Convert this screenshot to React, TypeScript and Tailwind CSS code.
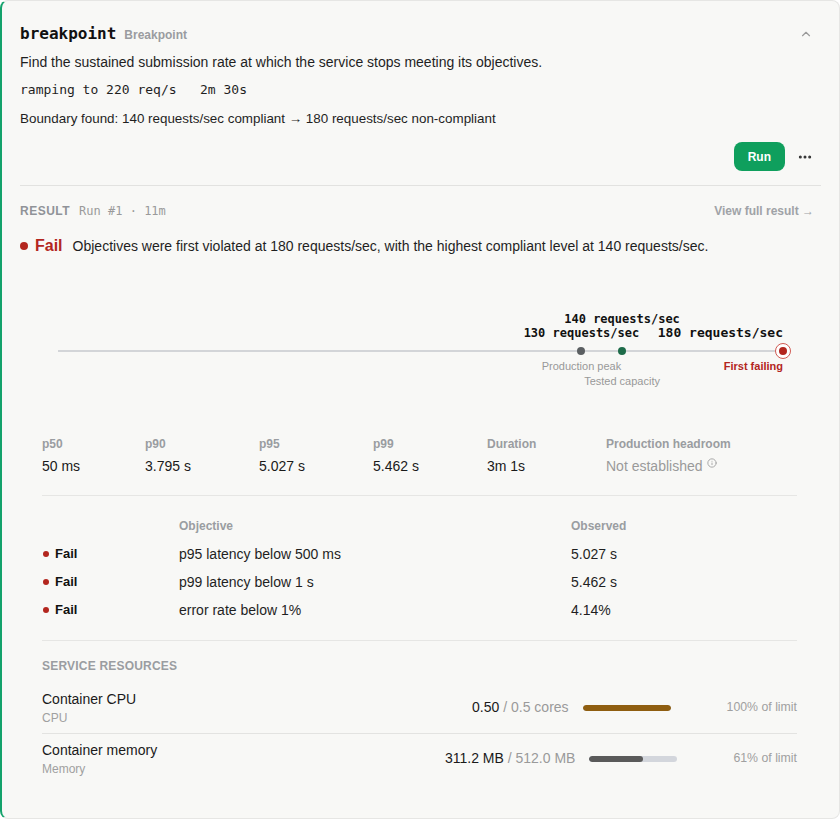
import React from 'react';
import { ChevronUp, MoreHorizontal, Info } from 'lucide-react';

const sans = "font-['Liberation_Sans',Arial,sans-serif]";
const mono = "font-['DejaVu_Sans_Mono',monospace]";

const stats = [
  { label: 'p50', value: '50 ms', w: 'w-[103px]' },
  { label: 'p90', value: '3.795 s', w: 'w-[114px]' },
  { label: 'p95', value: '5.027 s', w: 'w-[114px]' },
  { label: 'p99', value: '5.462 s', w: 'w-[114px]' },
  { label: 'Duration', value: '3m 1s', w: 'w-[119px]' },
];

const objectives = [
  { objective: 'p95 latency below 500 ms', observed: '5.027 s' },
  { objective: 'p99 latency below 1 s', observed: '5.462 s' },
  { objective: 'error rate below 1%', observed: '4.14%' },
];

const resources = [
  { name: 'Container CPU', kind: 'CPU', used: '0.50', limit: '/ 0.5 cores', pct: 100, bar: 'bg-[#8f5e10]', note: '100% of limit', pad: 'pt-[15px] pb-[7px]' },
  { name: 'Container memory', kind: 'Memory', used: '311.2 MB', limit: '/ 512.0 MB', pct: 61, bar: 'bg-[#5a5a5a]', note: '61% of limit', pad: 'pt-[6px]' },
];

function Timeline() {
  return (
    <div className="relative mx-[38px] mt-[53px] h-[78px]">
      {/* labels above */}
      <div className={`${mono} absolute top-0 left-[77.8%] -translate-x-1/2 whitespace-nowrap text-[12px] font-bold leading-4 text-[#111]`}>
        140 requests/sec
      </div>
      <div className={`${mono} absolute top-[14px] left-[72.2%] -translate-x-1/2 whitespace-nowrap text-[12px] font-bold leading-4 text-[#111]`}>
        130 requests/sec
      </div>
      <div className={`${mono} absolute top-[14px] right-0 whitespace-nowrap text-[13px] font-bold leading-4 text-[#111]`}>
        180 requests/sec
      </div>

      {/* axis */}
      <div className="absolute top-[39px] left-0 right-0 h-[2px] bg-[#d3d5d8]" />

      {/* markers */}
      <div className="absolute top-[36px] left-[72.2%] -translate-x-1/2 h-2 w-2 rounded-full bg-[#5b5f62]" />
      <div className="absolute top-[36px] left-[77.8%] -translate-x-1/2 h-2 w-2 rounded-full bg-[#1d6b49]" />
      <div className="absolute top-[32px] left-full -translate-x-1/2 flex h-4 w-4 items-center justify-center rounded-full border-[1.5px] border-[#d05a52] bg-white">
        <div className="h-2 w-2 rounded-full bg-[#b3261e]" />
      </div>

      {/* labels below */}
      <div className={`${sans} absolute top-[47px] left-[72.2%] -translate-x-1/2 whitespace-nowrap text-[11px] leading-4 text-[#999]`}>
        Production peak
      </div>
      <div className={`${sans} absolute top-[62px] left-[77.8%] -translate-x-1/2 whitespace-nowrap text-[11px] leading-4 text-[#999]`}>
        Tested capacity
      </div>
      <div className={`${sans} absolute top-[47px] right-0 whitespace-nowrap text-[11px] font-bold leading-4 text-[#b3261e]`}>
        First failing
      </div>
    </div>
  );
}

export default function App() {
  return (
    <div className={`${sans} bg-white text-[#1a1a1a]`}>
      <div className="w-full rounded-lg border border-[#e6e6e4] border-l-2 border-l-[#13a26b] bg-[#f8f8f6] pl-[18px] pr-[18px] pt-[21px] pb-[41px]">
        {/* header */}
        <div className="flex h-6 items-center justify-between">
          <div className="flex items-baseline gap-2">
            <span className={`${mono} text-[16px] font-bold text-[#111]`}>breakpoint</span>
            <span className="text-[12px] font-bold text-[#9a9ca0]">Breakpoint</span>
          </div>
          <ChevronUp size={14} className="mr-[8px] text-[#9a9a9a]" />
        </div>

        <p className="mt-[6px] text-[14px] leading-5 text-[#1f1f1f]">
          Find the sustained submission rate at which the service stops meeting its objectives.
        </p>
        <p className={`${mono} mt-2 whitespace-pre text-[13px] leading-5 text-[#1f1f1f]`}>
          {'ramping to 220 req/s   2m 30s'}
        </p>
        <p className="mt-[9px] text-[13.4px] leading-5 text-[#1f1f1f]">
          Boundary found: 140 requests/sec compliant → 180 requests/sec non-compliant
        </p>

        <div className="mt-[13px] flex items-center justify-end gap-3">
          <button className="h-[29px] rounded-lg bg-[#0f9f5d] px-[14px] text-[12px] font-bold text-white">
            Run
          </button>
          <MoreHorizontal size={16} className="mr-[8px] text-[#333]" strokeWidth={2.5} />
        </div>

        <div className="mt-[14px] h-px bg-[#e2e2e0]" />

        {/* result */}
        <div className="mt-[17px] flex items-center justify-between leading-4">
          <div className="flex items-baseline gap-[9px]">
            <span className="text-[12px] font-bold uppercase tracking-[0.5px] text-[#909398]">Result</span>
            <span className={`${mono} text-[12px] text-[#9a9a9a]`}>Run #1 · 11m</span>
          </div>
          <span className="mr-[7px] text-[12px] font-bold text-[#a0a3a7]">View full result →</span>
        </div>

        <div className="mt-[15px] flex h-6 items-center">
          <span className="h-2 w-2 rounded-full bg-[#b3261e]" />
          <span className="ml-[7px] text-[16px] font-bold text-[#b3261e]">Fail</span>
          <span className="ml-[10px] text-[14px] text-[#1f1f1f]">
            Objectives were first violated at 180 requests/sec, with the highest compliant level at 140 requests/sec.
          </span>
        </div>

        <Timeline />

        {/* stats + tables */}
        <div className="ml-[22px] mr-[24px]">
          <div className="mt-[47px] flex">
            {stats.map((s) => (
              <div key={s.label} className={s.w}>
                <div className="text-[12px] font-bold leading-4 text-[#9a9da1]">{s.label}</div>
                <div className="mt-[4px] text-[14px] leading-5 text-[#1a1a1a]">{s.value}</div>
              </div>
            ))}
            <div>
              <div className="text-[12px] font-bold leading-4 text-[#9a9da1]">Production headroom</div>
              <div className="mt-[4px] flex items-start text-[14px] leading-5 text-[#9a9a9a]">
                Not established
                <Info size={10} className="ml-[4px] mt-[2px] text-[#9a9a9a]" />
              </div>
            </div>
          </div>

          <div className="mt-[19px] h-px bg-[#e6e6e4]" />

          <div className="mt-[22px] flex text-[12px] font-bold leading-4 text-[#9a9da1]">
            <div className="w-[137px]" />
            <div className="w-[392px]">Objective</div>
            <div>Observed</div>
          </div>
          <div className="mt-[6px]">
            {objectives.map((o) => (
              <div key={o.objective} className="flex h-7 items-center text-[14px]">
                <div className="flex w-[137px] items-center">
                  <span className="ml-px h-[6px] w-[6px] rounded-full bg-[#b3261e]" />
                  <span className="ml-[6px] text-[13px] font-bold text-[#111]">Fail</span>
                </div>
                <div className="w-[392px] text-[#1f1f1f]">{o.objective}</div>
                <div className="text-[#1f1f1f]">{o.observed}</div>
              </div>
            ))}
          </div>

          <div className="mt-[16px] h-px bg-[#e6e6e4]" />

          <div className="mt-[17px] text-[12px] font-bold uppercase leading-4 tracking-[0.2px] text-[#9a9da1]">
            Service resources
          </div>

          {resources.map((r, i) => (
            <div
              key={r.name}
              className={`flex items-center justify-between ${r.pad} ${i === 0 ? 'border-b border-[#e3e3e1]' : ''}`}
            >
              <div>
                <div className="text-[14px] leading-5 text-[#1a1a1a]">{r.name}</div>
                <div className="mt-px text-[12px] leading-4 text-[#a0a0a0]">{r.kind}</div>
              </div>
              <div className="flex items-center">
                <span className="text-[14px] text-[#1a1a1a]">
                  {r.used} <span className="text-[#9a9a9a]">{r.limit}</span>
                </span>
                <div className="ml-[14px] h-[6px] w-[88px] overflow-hidden rounded-full bg-[#d3d6dc]">
                  <div className={`h-full rounded-full ${r.bar}`} style={{ width: `${r.pct}%` }} />
                </div>
                <span className="ml-[56px] text-[12.3px] text-[#a0a0a0]">{r.note}</span>
              </div>
            </div>
          ))}
        </div>
      </div>
    </div>
  );
}
